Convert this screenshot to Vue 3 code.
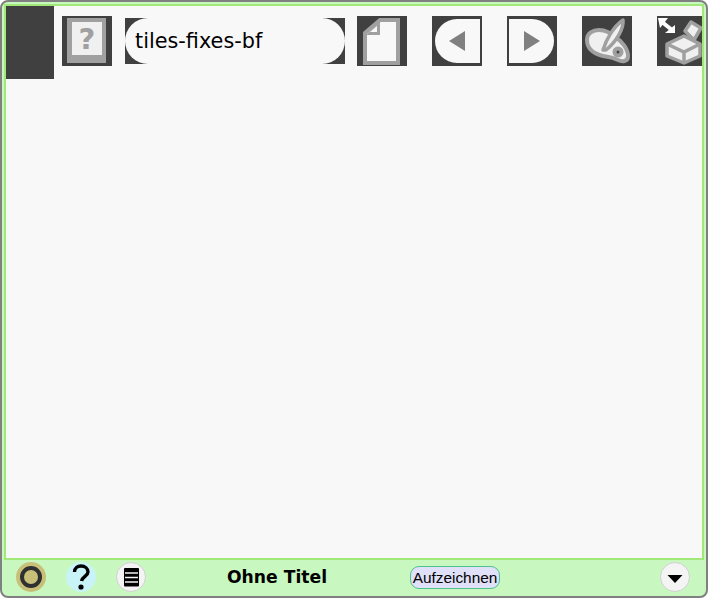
<template>
  <div class="frame">
    <div class="canvas">
      <div class="toolbar">
        <div class="block"></div>
        <button class="tool first">
          <svg viewBox="0 0 50 50" width="50" height="50">
            <rect x="5" y="2" width="39" height="45" fill="#a0a0a0" />
            <rect x="10" y="6" width="30" height="33" fill="#f0f0f0" />
            <text x="25" y="33" text-anchor="middle" class="qmark">?</text>
          </svg>
        </button>
        <div class="name-wrap">
          <div class="name">tiles-fixes-bf</div>
        </div>
        <button class="tool page">
          <svg viewBox="0 0 50 50" width="50" height="50">
            <path d="M23 4H41V47H8V17Z" fill="#f8f8f8" stroke="#a0a0a0" stroke-width="4" />
            <path d="M23 6V19H9Z" fill="#a0a0a0" />
            <path d="M20 10V16H13Z" fill="#f8f8f8" />
          </svg>
        </button>
        <button class="tool prev">
          <svg viewBox="0 0 50 50" width="50" height="50">
            <path d="M25 3H48V47H25A22 22 0 0 1 25 3Z" fill="#f8f8f8" />
            <path d="M17 25L33 15V35Z" fill="#808080" />
          </svg>
        </button>
        <button class="tool next">
          <svg viewBox="0 0 50 50" width="50" height="50">
            <path d="M2 3H25A22 22 0 0 1 25 47H2Z" fill="#f8f8f8" />
            <path d="M33 25L17 15V35Z" fill="#808080" />
          </svg>
        </button>
        <button class="tool palette">
          <svg viewBox="0 0 50 50" width="50" height="50">
            <path d="M5 24C5 17 11 14 17 14C24 14 28 17 33 21C40 25 46 33 46 40C46 46 40 46 36 44C30 41 27 41 21 40C13 38 5 34 5 24Z" fill="#f0f0f0" stroke="#a0a0a0" stroke-width="4" />
            <circle cx="36" cy="36" r="5.5" fill="#a0a0a0" />
            <circle cx="36" cy="36" r="1.5" fill="#444" />
            <path d="M21 34C24 24 31 11 41 4C42 12 35 25 24 34Z" fill="#f0f0f0" stroke="#a0a0a0" stroke-width="3.5" stroke-linejoin="round" />
          </svg>
        </button>
        <button class="tool box">
          <svg viewBox="0 0 50 50" width="50" height="50">
            <path d="M5 6L15 14" stroke="#fff" stroke-width="4" />
            <path d="M1 2H11L3 12Z" fill="#fff" />
            <path d="M18 17H8L18 9Z" fill="#fff" />
            <path d="M28 15L34 6L44 12L37 24Z" fill="#f0f0f0" stroke="#a0a0a0" stroke-width="3.5" stroke-linejoin="round" />
            <path d="M10 28L27 20L43 28V40L27 47L10 40Z" fill="#f0f0f0" stroke="#a0a0a0" stroke-width="3.5" stroke-linejoin="round" />
            <path d="M10 28L27 36L43 28M27 36V47" fill="none" stroke="#a0a0a0" stroke-width="3.5" />
          </svg>
        </button>
      </div>
    </div>
    <div class="bar">
      <div class="left-icons">
        <span class="round stop"></span>
        <span class="round help">
          <svg viewBox="0 0 30 30" width="30" height="30">
            <path d="M8.5 10C8.5 6 11.5 4 15 4C19 4 22 6.5 22 10C22 14 16 14.5 15.5 19" fill="none" stroke="#000" stroke-width="3.4" />
            <circle cx="15" cy="25" r="2.6" fill="#000" />
          </svg>
        </span>
        <span class="round menu">
          <svg viewBox="0 0 30 30" width="30" height="30">
            <rect x="8" y="6" width="15" height="18.5" rx="1" fill="#000" />
            <path d="M9 11H22M9 15.5H22M9 20H22" stroke="#f4f4f4" stroke-width="1.4" />
          </svg>
        </span>
      </div>
      <span class="title">Ohne Titel</span>
      <button class="record">Aufzeichnen</button>
      <span class="round more">
        <svg viewBox="0 0 30 30" width="30" height="30">
          <path d="M7.5 13H22.5L15 21Z" fill="#000" />
        </svg>
      </span>
    </div>
  </div>
</template>

<script setup>
</script>

<style>
html, body { margin: 0; height: 100%; background: #fff; }
</style>

<style scoped>
.frame {
  box-sizing: border-box;
  width: 708px;
  height: 598px;
  display: flex;
  flex-direction: column;
  border: 2px solid #808080;
  border-radius: 8px;
  background: #c8f8c0;
  overflow: hidden;
  font-family: "DejaVu Sans", sans-serif;
}
.canvas {
  box-sizing: border-box;
  flex: 1;
  min-height: 0;
  margin: 2px 2px 0;
  border: 2px solid #a0e878;
  background: #f8f8f8;
  overflow: hidden;
}
.toolbar {
  display: flex;
  align-items: flex-start;
}
.block {
  width: 48px;
  height: 73px;
  background: #404040;
  flex: none;
}
.tool {
  width: 50px;
  height: 50px;
  padding: 0;
  margin: 10px 0 0 0;
  border: 0;
  background: #404040;
  flex: none;
  display: block;
}
.tool svg { display: block; }
.first { margin-left: 8px; }
.name-wrap {
  width: 220px;
  height: 46px;
  margin: 12px 0 0 13px;
  background: #404040;
  flex: none;
}
.name {
  box-sizing: border-box;
  height: 46px;
  border-radius: 23px;
  background: #f8f8f8;
  padding: 0 10px;
  line-height: 46px;
  font-size: 20.8px;
  color: #000;
}
.page { margin-left: 12px; }
.prev { margin-left: 25px; }
.next { margin-left: 25px; }
.palette { margin-left: 25px; }
.box { margin-left: 25px; }
.qmark {
  font-family: "DejaVu Sans", sans-serif;
  font-size: 29px;
  font-weight: bold;
  fill: #a0a0a0;
}
.bar {
  box-sizing: border-box;
  height: 36px;
  flex: none;
  padding-bottom: 2px;
  display: flex;
  align-items: center;
}
.left-icons {
  display: flex;
  gap: 20px;
  margin-left: 14px;
}
.round {
  box-sizing: border-box;
  width: 30px;
  height: 30px;
  border-radius: 50%;
  display: block;
  flex: none;
}
.round svg { display: block; }
.stop {
  background: #c8c078;
  position: relative;
}
.stop::after {
  content: "";
  position: absolute;
  left: 4px;
  top: 4px;
  width: 22px;
  height: 22px;
  box-sizing: border-box;
  border: 4px solid #303030;
  border-radius: 50%;
}
.help { background: #c8f4f8; }
.menu { background: #f4f4f4; border: 1px solid #d0d0d0; }
.menu svg { margin: -1px; }
.title {
  margin-left: 81px;
  font-size: 17.2px;
  font-weight: bold;
  color: #000;
  width: 183px;
}
.record {
  box-sizing: border-box;
  width: 90px;
  height: 23px;
  margin-top: 1px;
  padding: 0;
  border: 1px solid #50c090;
  border-radius: 9px;
  background: #e0e0f8;
  font-family: "Liberation Sans", sans-serif;
  font-size: 15.4px;
  white-space: nowrap;
  color: #000;
}
.more {
  margin-left: auto;
  margin-right: 16px;
  background: #f4f4f4;
  border: 1px solid #d0d0d0;
}
.more svg { margin: -1px; }
</style>
